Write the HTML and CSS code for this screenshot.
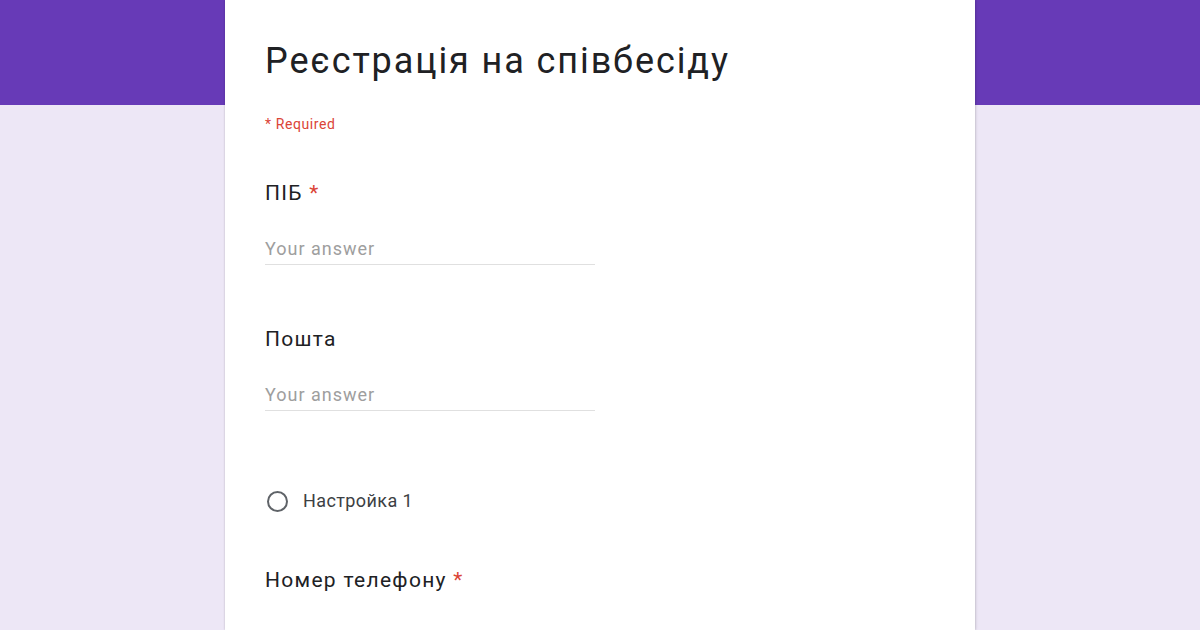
FILE: index.html
```html
<!DOCTYPE html>
<html lang="uk">
  <head>
    <meta charset="utf-8">
    <title>Реєстрація на співбесіду</title>
    <link rel="stylesheet" href="styles.css">
  </head>
  <body>
    <main class="form-card">
      <h1 class="form-title">Реєстрація на співбесіду</h1>
      <p class="required-note">* Required</p>

      <div class="question">
        <div class="question-label">ПІБ <span class="star">*</span></div>
        <div class="answer">Your answer</div>
      </div>

      <div class="question">
        <div class="question-label">Пошта</div>
        <div class="answer">Your answer</div>
      </div>

      <div class="question question-choice">
        <label class="choice"><span class="radio"></span>Настройка 1</label>
      </div>

      <div class="question">
        <div class="question-label">Номер телефону <span class="star">*</span></div>
      </div>
    </main>
  </body>
</html>
```

FILE: styles.css
```css
html, body { height: 100%; }
body { margin: 0; overflow: hidden; background: linear-gradient(#673ab7 0, #673ab7 105px, #ede7f6 105px); font-family: Roboto, "Liberation Sans", sans-serif; color: #202124; }

.form-card { width: 750px; height: 100%; box-sizing: border-box; margin: 0 auto; padding: 41px 40px 0; background: #fff; box-shadow: 0 0 2px rgba(0,0,0,0.18), 1px 0 3px rgba(0,0,0,0.1); }

.form-title { margin: 0; font-size: 36px; line-height: 40px; font-weight: 400; letter-spacing: 1.9px; color: #202124; }
.required-note { margin: 33px 0 0; font-size: 14px; line-height: 20px; letter-spacing: 0.6px; color: #db4437; }

.question { margin-top: 45px; }
.question + .question { margin-top: 60px; }
.question-label { font-size: 21px; line-height: 28px; letter-spacing: 1.3px; color: #202124; }
.star { color: #db4437; }

.answer { width: 330px; margin-top: 30px; padding-bottom: 3px; border-bottom: 1px solid #e0e0e0; font-size: 18px; line-height: 24px; letter-spacing: 1px; color: #9e9e9e; }

.question-choice { margin-top: 0; }
.question + .question-choice { margin-top: 78px; }
.question-choice + .question { margin-top: 53px; }
.choice { display: flex; align-items: center; gap: 15px; font-size: 18px; line-height: 24px; letter-spacing: 0.4px; color: #3c4043; }
.radio { width: 17px; height: 17px; margin-left: 2px; border: 2px solid #5f6368; border-radius: 50%; }
```
